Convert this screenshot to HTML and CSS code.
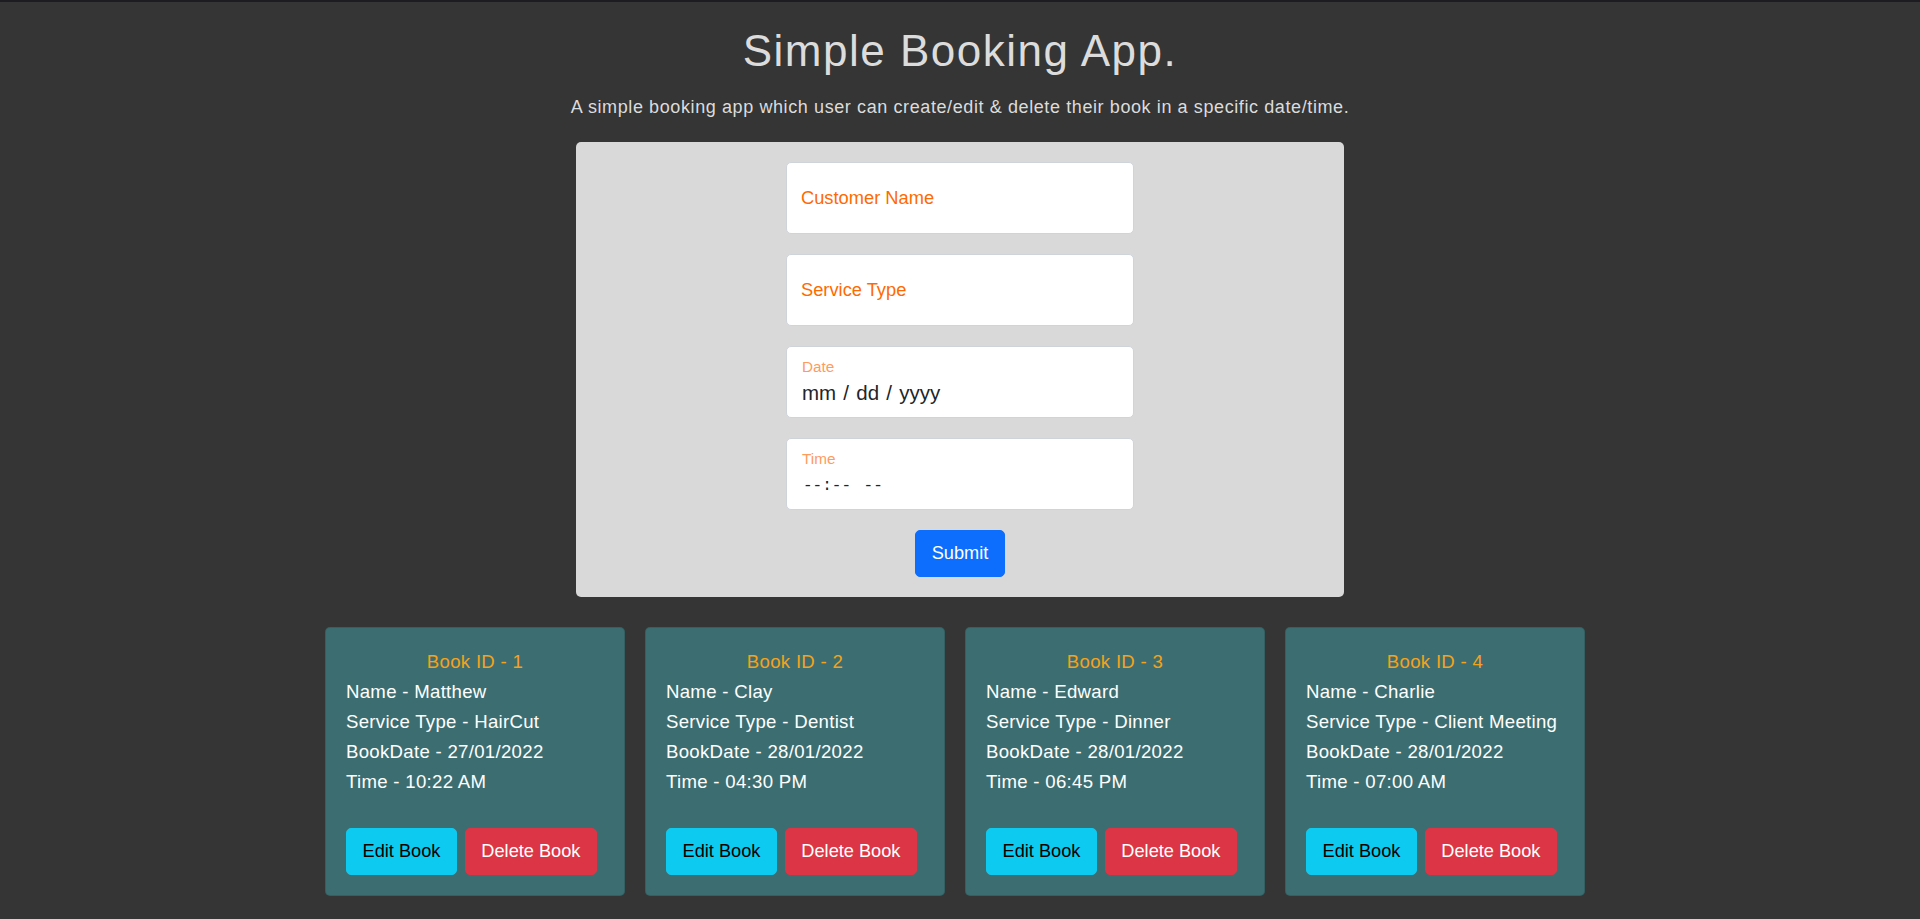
FILE: index.html
```html
<!DOCTYPE html>
<html lang="en">
<head>
<meta charset="utf-8">
<title>Simple Booking App.</title>
<link rel="stylesheet" href="styles.css">
</head>
<body>
<header class="hero">
  <h1 class="title">Simple Booking App.</h1>
  <p class="subtitle">A simple booking app which user can create/edit &amp; delete their book in a specific date/time.</p>
</header>
<main>
  <form class="panel">
    <input class="field field-input" type="text" placeholder="Customer Name">
    <input class="field field-input" type="text" placeholder="Service Type">
    <div class="field field-stack">
      <span class="field-label">Date</span>
      <span class="field-value">mm / dd / yyyy</span>
    </div>
    <div class="field field-stack">
      <span class="field-label">Time</span>
      <span class="field-value field-time">--:-- --</span>
    </div>
    <button class="btn btn-primary" type="button">Submit</button>
  </form>

  <section class="cards">
    <article class="card">
      <p class="card-line card-id">Book ID - 1</p>
      <p class="card-line">Name - Matthew</p>
      <p class="card-line">Service Type - HairCut</p>
      <p class="card-line">BookDate - 27/01/2022</p>
      <p class="card-line">Time - 10:22 AM</p>
      <div class="card-actions">
        <button class="btn btn-info" type="button">Edit Book</button>
        <button class="btn btn-danger" type="button">Delete Book</button>
      </div>
    </article>
    <article class="card">
      <p class="card-line card-id">Book ID - 2</p>
      <p class="card-line">Name - Clay</p>
      <p class="card-line">Service Type - Dentist</p>
      <p class="card-line">BookDate - 28/01/2022</p>
      <p class="card-line">Time - 04:30 PM</p>
      <div class="card-actions">
        <button class="btn btn-info" type="button">Edit Book</button>
        <button class="btn btn-danger" type="button">Delete Book</button>
      </div>
    </article>
    <article class="card">
      <p class="card-line card-id">Book ID - 3</p>
      <p class="card-line">Name - Edward</p>
      <p class="card-line">Service Type - Dinner</p>
      <p class="card-line">BookDate - 28/01/2022</p>
      <p class="card-line">Time - 06:45 PM</p>
      <div class="card-actions">
        <button class="btn btn-info" type="button">Edit Book</button>
        <button class="btn btn-danger" type="button">Delete Book</button>
      </div>
    </article>
    <article class="card">
      <p class="card-line card-id">Book ID - 4</p>
      <p class="card-line">Name - Charlie</p>
      <p class="card-line">Service Type - Client Meeting</p>
      <p class="card-line">BookDate - 28/01/2022</p>
      <p class="card-line">Time - 07:00 AM</p>
      <div class="card-actions">
        <button class="btn btn-info" type="button">Edit Book</button>
        <button class="btn btn-danger" type="button">Delete Book</button>
      </div>
    </article>
  </section>
</main>
</body>
</html>
```

FILE: styles.css
```css
html {
  background: #353535;
}

body {
  margin: 0;
  min-height: 917px;
  border-top: 2px solid #1d1c21;
  background: #353535;
  font-family: "Liberation Sans", Arial, sans-serif;
  color: #ffffff;
}

.hero {
  text-align: center;
}

.title {
  margin: 23px 0 0;
  font-size: 44px;
  line-height: 52px;
  font-weight: 400;
  letter-spacing: 1.5px;
  color: #dcdcdc;
}

.subtitle {
  margin: 17px 0 0;
  font-size: 18px;
  line-height: 27px;
  letter-spacing: 0.6px;
  color: #dcdcdc;
}

.panel {
  width: 768px;
  margin: 21px auto 0;
  padding: 20px 0;
  box-sizing: border-box;
  background: #d9d9d9;
  border-radius: 5px;
  display: flex;
  flex-direction: column;
  align-items: center;
  gap: 20px;
}

.field {
  width: 348px;
  height: 72px;
  box-sizing: border-box;
  background: #ffffff;
  border: 1px solid #ced4da;
  border-radius: 5px;
  margin: 0;
}

.field-input {
  display: block;
  padding: 0 14px;
  font-family: "Liberation Sans", Arial, sans-serif;
  font-size: 18.3px;
  color: #212529;
  outline: none;
}

.field-input::placeholder {
  color: #ff6a00;
  opacity: 1;
}

.field-stack {
  display: flex;
  flex-direction: column;
  padding: 11px 14px 0 15px;
}

.field-label {
  font-size: 15.3px;
  line-height: 18px;
  color: #ff9b5c;
}

.field-value {
  margin-top: 5px;
  font-size: 20.5px;
  line-height: 24px;
  word-spacing: 1.5px;
  color: #212529;
}

.field-time {
  white-space: pre;
  font-family: "Liberation Mono", "Courier New", monospace;
  font-size: 16px;
  word-spacing: 3px;
  margin-top: 6px;
  padding-left: 1px;
}

.btn {
  font-family: "Liberation Sans", Arial, sans-serif;
  font-size: 18.2px;
  line-height: 29px;
  padding: 8px 15.5px;
  border: 1px solid transparent;
  border-radius: 5px;
  cursor: pointer;
}

.btn-primary {
  padding: 8px 16px;
  background: #0d6efd;
  border-color: #0d6efd;
  color: #ffffff;
}

.btn-info {
  background: #0dcaf0;
  border-color: #0dcaf0;
  color: #000000;
}

.btn-danger {
  background: #dc3545;
  border-color: #dc3545;
  color: #ffffff;
}

.cards {
  width: 1270px;
  margin: 30px auto 0;
  display: flex;
  gap: 20px;
}

.card {
  width: 300px;
  box-sizing: border-box;
  background: #3c6e71;
  border: 1px solid rgba(0, 0, 0, 0.125);
  border-radius: 5px;
  padding: 19px 20px 20px;
}

.card-line {
  margin: 0;
  font-size: 18.6px;
  line-height: 30px;
  letter-spacing: 0.3px;
  color: #ffffff;
}

.card-id {
  text-align: center;
  color: #f5a21b;
}

.card-actions {
  margin-top: 31px;
  display: flex;
  gap: 8px;
}
```
